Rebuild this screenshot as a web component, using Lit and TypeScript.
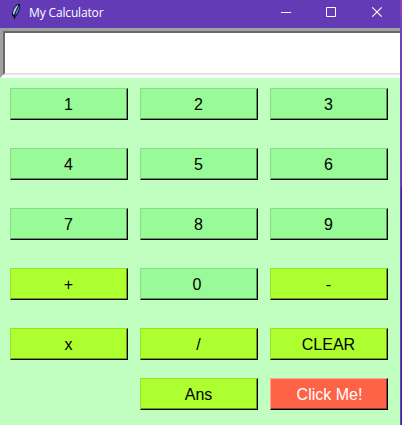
import { LitElement, html, css } from "lit";
import { customElement, property } from "lit/decorators.js";
import { classMap } from "lit/directives/class-map.js";

type Kind = "digit" | "operator" | "danger";

@customElement("calc-key")
class CalcKey extends LitElement {
  @property() label = "";
  @property() kind: Kind = "digit";

  static styles = css`
    :host { display: block; }
    .key {
      display: block;
      box-sizing: border-box;
      width: 118px;
      height: 32px;
      margin: 0;
      padding: 2px 1px 0 0;
      border: 1px solid;
      border-radius: 0;
      font: 16px/28px "Liberation Sans", Arial, sans-serif;
      text-align: center;
      color: #000;
    }
    .digit {
      background: #98fb98;
      border-color: #87de87 #000 #000 #87de87;
      box-shadow: inset -1px -1px #5b975b;
    }
    .zero { padding-right: 4px; }
    .operator {
      background: #adff2f;
      border-color: #99e22a #000 #000 #99e22a;
      box-shadow: inset -1px -1px #68991c;
    }
    .danger {
      padding-right: 0;
      padding-left: 1px;
      background: #ff6347;
      border-color: #ffa191 #000 #000 #ffa191;
      box-shadow: inset -1px -1px #993b2b;
      color: #fff;
    }
  `;

  render() {
    const classes = { key: true, [this.kind]: true, zero: this.label === "0" };
    return html`<button class=${classMap(classes)}>${this.label}</button>`;
  }
}

@customElement("title-bar")
class TitleBar extends LitElement {
  static styles = css`
    :host {
      display: flex;
      align-items: center;
      height: 28px;
      background: #633bb7;
      color: #fff;
    }
    svg { display: block; }
    .feather { margin: -4px 0 0 8px; }
    .title {
      flex: 1;
      margin: -2px 0 0 5px;
      font: 12px/16px "Open Sans", "Noto Sans", sans-serif;
      letter-spacing: -0.15px;
      white-space: nowrap;
    }
    .controls { margin-top: -4px; }
  `;

  render() {
    return html`
      <svg class="feather" width="16" height="18" viewBox="0 0 16 18">
        <path d="M10.5 .8 L12.2 1.6 L12 5 L10.8 9 L8.8 12.5 L7.2 14.2 L7 16.3 L6 16.3 L6 14.2 L4 12.5 L4.2 9.5 L5.6 5.5 L8 2.3 Z" fill="#0b1020" />
        <path d="M10.5 1.8 L8 3.6 L6 6.6 L5 10 L5.2 12 L6.5 10.5 L8.8 5.5 Z" fill="#b4dcfb" />
        <path d="M11.3 2.6 L11.1 5.2 L9.8 9 L8 11.7 L7 12.6 L8.3 8.5 Z" fill="#4f90d8" />
        <path d="M9.8 4 L7.5 9 L6.4 13" fill="none" stroke="#14284a" stroke-width="0.6" />
      </svg>
      <span class="title">My Calculator</span>
      <svg class="controls" width="137" height="12" viewBox="0 0 137 12" fill="none" stroke="#fff">
        <path d="M18 6.5h10" />
        <path d="M63.5 1.5h9v9h-9z" />
        <path d="M109.3 1.3l9.4 9.4M118.7 1.3l-9.4 9.4" stroke-width="1.2" />
      </svg>
    `;
  }
}

@customElement("app-root")
class AppRoot extends LitElement {
  static styles = css`
    :host {
      display: flex;
      width: 402px;
      height: 425px;
      overflow: hidden;
      background: #c1ffc1;
    }
    .window { width: 400px; }
    .edge {
      box-sizing: border-box;
      width: 2px;
      border-left: 1px solid #6e45bd;
      background: linear-gradient(#a83bb0 0 16px, #743bb8 16px, #6a38b4 187px, #35248a 187px);
    }
    .display {
      box-sizing: border-box;
      width: 410px;
      height: 50px;
      border: 3px solid;
      border-color: #a0a0a0 #fff #fff #a0a0a0;
    }
    .clip { overflow: hidden; }
    .field {
      box-sizing: border-box;
      height: 44px;
      border: 2px solid;
      border-color: #696969 #e3e3e3 #e3e3e3 #696969;
      background: #fff;
    }
    .pad {
      display: grid;
      grid-template-columns: repeat(3, 118px);
      grid-template-rows: repeat(4, 60px) 50px 32px;
      column-gap: 12px;
      padding: 10px 0 0 10px;
    }
    .last { grid-column-start: 2; }
  `;

  private keys: [string, Kind][] = [
    ["1", "digit"], ["2", "digit"], ["3", "digit"],
    ["4", "digit"], ["5", "digit"], ["6", "digit"],
    ["7", "digit"], ["8", "digit"], ["9", "digit"],
    ["+", "operator"], ["0", "digit"], ["-", "operator"],
    ["x", "operator"], ["/", "operator"], ["CLEAR", "operator"],
    ["Ans", "operator"], ["Click Me!", "danger"],
  ];

  render() {
    return html`
      <div class="window">
        <title-bar></title-bar>
        <div class="clip"><div class="display"><div class="field"></div></div></div>
        <div class="pad">
          ${this.keys.map(([label, kind]) => html`
            <calc-key class=${classMap({ last: label === "Ans" })} .label=${label} .kind=${kind}></calc-key>
          `)}
        </div>
      </div>
      <div class="edge"></div>
    `;
  }
}
